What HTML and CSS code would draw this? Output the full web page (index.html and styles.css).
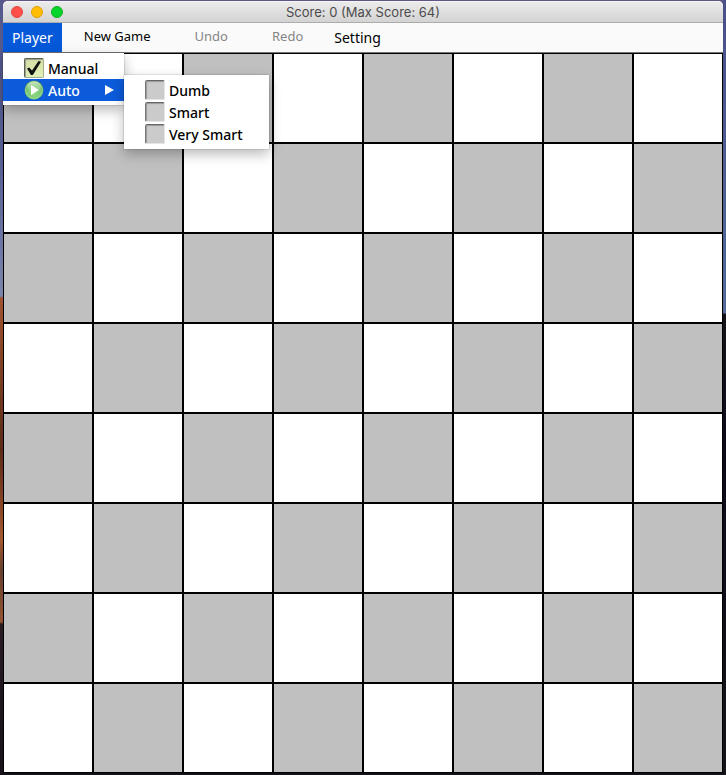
FILE: index.html
```html
<!DOCTYPE html>
<html lang="en">
<head>
<meta charset="utf-8">
<title>Score: 0 (Max Score: 64)</title>
<link rel="stylesheet" href="styles.css">
</head>
<body>
<main class="window">
  <header class="titlebar">
    <div class="lights">
      <button class="light close" aria-label="Close"></button>
      <button class="light minimize" aria-label="Minimize"></button>
      <button class="light zoom" aria-label="Zoom"></button>
    </div>
    <h1 class="title">Score: 0 (Max Score: 64)</h1>
  </header>
  <nav class="menubar">
    <div class="menu-anchor">
      <button class="menu open">Player</button>
      <div class="popup player-popup">
        <label class="item"><input class="check" type="checkbox" checked>Manual</label>
        <div class="submenu-anchor">
          <button class="item selected">
            <svg class="play" viewBox="0 0 20 20" aria-hidden="true">
              <defs>
                <radialGradient id="green" cx="50%" cy="65%" r="60%">
                  <stop offset="0" stop-color="#8fdc86"/>
                  <stop offset="0.65" stop-color="#79c572"/>
                  <stop offset="1" stop-color="#4f9150"/>
                </radialGradient>
                <linearGradient id="shine" x1="0" y1="0" x2="0" y2="1">
                  <stop offset="0" stop-color="#e2f4de" stop-opacity="0.8"/>
                  <stop offset="1" stop-color="#b5e3ad" stop-opacity="0.2"/>
                </linearGradient>
              </defs>
              <circle cx="10" cy="10" r="9.5" fill="url(#green)"/>
              <circle cx="10" cy="10" r="8.3" fill="none" stroke="#a8dda1" stroke-width="0.8"/>
              <ellipse cx="10" cy="6.5" rx="7" ry="5" fill="url(#shine)"/>
              <path d="M7 5 L15 10 L7 15 Z" fill="#fff"/>
            </svg>
            Auto
            <svg class="arrow" viewBox="0 0 9 10" aria-hidden="true"><path d="M0 0 L9 5 L0 10 Z" fill="#fff"/></svg>
          </button>
          <div class="popup auto-popup">
            <label class="item"><input class="check" type="checkbox">Dumb</label>
            <label class="item"><input class="check" type="checkbox">Smart</label>
            <label class="item"><input class="check" type="checkbox">Very Smart</label>
          </div>
        </div>
      </div>
    </div>
    <button class="action">New Game</button>
    <button class="action" disabled>Undo</button>
    <button class="action" disabled>Redo</button>
    <button class="menu">Setting</button>
  </nav>
  <section class="board" id="board" aria-label="Board"></section>
</main>
<script src="board.js"></script>
</body>
</html>
```
FILE: styles.css
```css
* {
  box-sizing: border-box;
}

body {
  margin: 0;
  min-height: 100vh;
  padding: 1px 3px 2px;
  background:
    linear-gradient(#4b4f86, #4e6795 260px, #566c96 313px, #15121a 314px, #0b0a16 460px, #15131a) right / 3px 100% no-repeat,
    linear-gradient(#57598c, #535c91 150px, #7a86ac 296px, #a0532f 298px, #70391f 400px, #5c2a17 450px, #a4582f 540px, #664030 570px, #94532f 622px, #271b22 624px, #17121a) left / 3px 100% no-repeat,
    linear-gradient(#5f5685 50%, #15111a 50%);
  font-family: "Noto Sans", sans-serif;
}

button {
  margin: 0;
  border: 0;
  background: none;
  font-family: inherit;
  color: #000;
}

.window {
  border-radius: 5px 5px 0 0;
  background: #fafafa;
}

.titlebar {
  position: relative;
  display: flex;
  align-items: center;
  justify-content: center;
  height: 22px;
  border-top: 1px solid #f5f5f5;
  border-bottom: 1px solid #acacac;
  border-radius: 5px 5px 0 0;
  background: linear-gradient(#ebebeb, #d3d3d3);
}

.lights {
  position: absolute;
  left: 8px;
  display: flex;
  gap: 8px;
}

.light {
  width: 12px;
  height: 12px;
  padding: 0;
  border: 1px solid #e2463f;
  border-radius: 50%;
  background: #ff5049;
}

.minimize {
  border-color: #e2a000;
  background: #ffbd05;
}

.zoom {
  border-color: #12ae22;
  background: #05d52b;
}

.title {
  margin: 0;
  font: 13px/20px Inter, sans-serif;
  color: #4b4b4b;
}

.menubar {
  display: flex;
  height: 30px;
  border-bottom: 1px solid #777;
}

.menu {
  height: 29px;
  padding: 0 9px;
  font-size: 14px;
  line-height: 29px;
}

.open {
  background: #0559d9;
  color: #fff;
}

.action {
  padding: 0 22px 4px;
  font-size: 13px;
}

.action:disabled {
  color: #858585;
}

.menu-anchor,
.submenu-anchor {
  position: relative;
}

.popup {
  position: absolute;
  z-index: 1;
  padding: 4px 0;
  background: #fff;
  box-shadow: 0 0 1px rgba(0, 0, 0, 0.5), 0 5px 12px rgba(0, 0, 0, 0.28);
}

.player-popup {
  top: 30px;
  left: 0;
  width: 121px;
}

.auto-popup {
  top: -4px;
  left: 100%;
  width: 145px;
}

.item {
  display: flex;
  align-items: center;
  gap: 4px;
  width: 100%;
  height: 22px;
  padding: 0 10px 0 21px;
  font-size: 14px;
  font-weight: 500;
  white-space: nowrap;
}

.selected {
  background: #0b5bdb;
  color: #fff;
}

.play {
  width: 20px;
  height: 20px;
}

.arrow {
  width: 9px;
  height: 10px;
  margin-left: auto;
}

.check {
  appearance: none;
  display: grid;
  width: 20px;
  height: 20px;
  margin: 0;
  border: 1px solid;
  border-color: #666 #e4e4e4 #e4e4e4 #777;
  border-radius: 2px;
  background: #cbcbcb;
  box-shadow: inset 1px 1px 1px #999;
}

.check:checked {
  border-color: #59634b #a5ad8b #a5ad8b #59634b;
  background: linear-gradient(#d3e1a1, #e3efba);
}

.check:checked::before {
  content: "";
  width: 14px;
  height: 14px;
  place-self: center;
  background: #111;
  clip-path: polygon(0 54%, 15% 46%, 36% 68%, 82% 0, 100% 6%, 42% 100%, 28% 100%);
}

.board {
  display: grid;
  grid-template-columns: repeat(8, 1fr);
}

.cell {
  aspect-ratio: 1;
  border: 1px solid #000;
  background: #fff;
}

.dark {
  background: #c0c0c0;
}
```
FILE: board.js
```js
const board = document.getElementById("board");

for (let row = 0; row < 8; row++) {
  for (let column = 0; column < 8; column++) {
    const cell = document.createElement("div");
    cell.className = (row + column) % 2 === 0 ? "cell dark" : "cell";
    board.append(cell);
  }
}
```
